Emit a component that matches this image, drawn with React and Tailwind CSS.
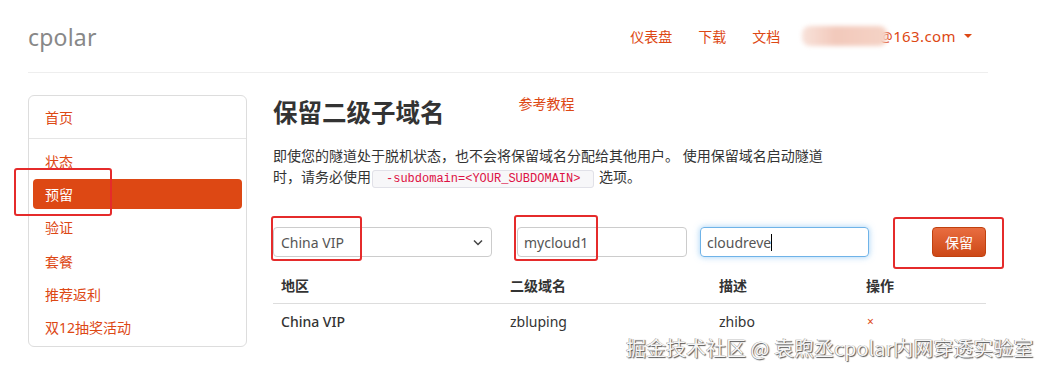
export default function App() {
  const orange = "text-[#dd4814]";
  const side = ["状态", "预留", "验证", "套餐", "推荐返利", "双12抽奖活动"];
  return (
    <div className="relative w-[1047px] h-[372px] overflow-hidden bg-white font-['Noto_Sans','Noto_Sans_CJK_SC',sans-serif] text-[#333]">
      {/* header */}
      <div className="ml-[28px] w-[960px] h-[73px] border-b border-[#eeeeee] flex items-center justify-between">
        <div className="text-[23px] text-[#888] leading-none pt-[2px] tracking-[0.2px]">cpolar</div>
        <div className="flex items-center text-[14px] text-[#dd4814] pr-[16px]">
          <span>仪表盘</span>
          <span className="ml-[26px]">下载</span>
          <span className="ml-[26px]">文档</span>
          <div className="ml-[22px] w-[85px] h-[20px] rounded-[8px] bg-[linear-gradient(90deg,#f8e2da,#f2c9bb_40%,#f5d3c6)] blur-[2px]"></div>
          <span className="ml-[-8px] text-[15px] tracking-[0.4px]">@163.com</span>
          <span className="ml-[8px] w-0 h-0 border-x-[4px] border-t-[4px] border-x-transparent border-t-[#dd4814]"></span>
        </div>
      </div>

      {/* body */}
      <div className="ml-[28px] mt-[22px] flex items-start">
        <div className="w-[219px] h-[252px] border border-[#dddddd] rounded-[6px] pt-[6px] px-[4px]">
          <div className={`h-[30px] flex items-center pl-[12px] text-[14px] ${orange}`}>首页</div>
          <div className="-mx-[4px] mt-[6px] border-t border-[#e5e5e5]"></div>
          <div className="mt-[7px] flex flex-col gap-[3.4px]">
            {side.map((s) =>
              s === "预留" ? (
                <div key={s} className="h-[30px] flex items-center pl-[12px] text-[14px] text-white bg-[#dd4814] rounded-[4px]">{s}</div>
              ) : (
                <div key={s} className={`h-[30px] flex items-center pl-[12px] text-[14px] ${orange}`}>{s}</div>
              )
            )}
          </div>
        </div>

        <div className="ml-[26px] w-[713px]">
          <div className="h-[36px] flex items-start">
            <h1 className="text-[24.5px] font-bold leading-[36px] text-[#333]">保留二级子域名</h1>
            <a className="ml-[74px] text-[14px] leading-[18px] text-[#dd4814]">参考教程</a>
          </div>
          <p className="mt-[14px] text-[14px] leading-[21px] text-[#333]">
            即使您的隧道处于脱机状态，也不会将保留域名分配给其他用户。 使用保留域名启动隧道
            <br />
            时，请务必使用
            <code className="mx-[1px] px-[13px] py-[1px] font-['Liberation_Mono',monospace] text-[12px] leading-[16px] text-[#dd1144] bg-[#f7f7f9] border border-[#e1e1e8] rounded-[3px]">-subdomain=&lt;YOUR_SUBDOMAIN&gt;</code>
            {" "}选项。
          </p>

          {/* form */}
          <div className="mt-[40px] h-[30px] flex items-center">
            <div className="w-[219px] h-[30px] border border-[#cccccc] rounded-[4px] flex items-center justify-between pl-[7px] pr-[8px] text-[14px] text-[#555]">
              <span>China VIP</span>
              <svg width="10" height="7" viewBox="0 0 10 7" fill="none">
                <path d="M1 1.5 L5 5.5 L9 1.5" stroke="#444" strokeWidth="1.5" />
              </svg>
            </div>
            <div className="ml-[25px] w-[170px] h-[30px] border border-[#cccccc] rounded-[4px] flex items-center pl-[6px] text-[14px] text-[#555]">mycloud1</div>
            <div className="ml-[13px] w-[169px] h-[30px] border border-[#6fb3e8] rounded-[4px] shadow-[0_0_6px_rgba(82,168,236,0.55)] flex items-center pl-[6px] text-[14px] text-[#555]">
              cloudreve<span className="inline-block w-[1px] h-[17px] bg-black"></span>
            </div>
            <button className="ml-[63px] w-[54px] h-[30px] rounded-[4px] border border-[#c0410f] bg-[linear-gradient(#e96d40,#cd4816)] text-white text-[14px] flex items-center justify-center">保留</button>
          </div>

          {/* table */}
          <div className="mt-[12px] w-[713px] text-[14px]">
            <div className="grid grid-cols-[229px_209px_147px_128px] border-b border-[#dddddd] font-bold">
              <div className="py-[7px] pl-[8px] leading-[20px]">地区</div>
              <div className="py-[7px] pl-[8px] leading-[20px]">二级域名</div>
              <div className="py-[7px] pl-[8px] leading-[20px]">描述</div>
              <div className="py-[7px] pl-[8px] leading-[20px]">操作</div>
            </div>
            <div className="grid grid-cols-[229px_209px_147px_128px]">
              <div className="py-[8px] pl-[8px] leading-[20px] font-medium">China VIP</div>
              <div className="py-[8px] pl-[8px] leading-[20px]">zbluping</div>
              <div className="py-[8px] pl-[8px] leading-[20px]">zhibo</div>
              <div className="py-[8px] pl-[9px] leading-[20px] text-[12px] text-[#dd4814]">×</div>
            </div>
          </div>
        </div>
      </div>

      {/* annotation boxes */}
      <div className="absolute left-[14px] top-[168px] w-[98px] h-[48px] border-[2.5px] border-[#e52b2b] rounded-[3px]"></div>
      <div className="absolute left-[271px] top-[216px] w-[91px] h-[45px] border-[2.5px] border-[#e52b2b] rounded-[3px]"></div>
      <div className="absolute left-[514px] top-[215px] w-[84px] h-[46px] border-[2.5px] border-[#e52b2b] rounded-[3px]"></div>
      <div className="absolute left-[893px] top-[217px] w-[111px] h-[52px] border-[2.5px] border-[#e52b2b] rounded-[3px]"></div>

      {/* watermark */}
      <div className="absolute left-[626px] top-[335px] text-[20px] leading-[26px] whitespace-nowrap text-[#f6f6f6] font-['Noto_Sans_CJK_SC',sans-serif] [text-shadow:1px_1px_1px_#555,-0.5px_-0.5px_0.5px_#888]">
        掘金技术社区 @ 袁煦丞cpolar内网穿透实验室
      </div>
    </div>
  );
}
